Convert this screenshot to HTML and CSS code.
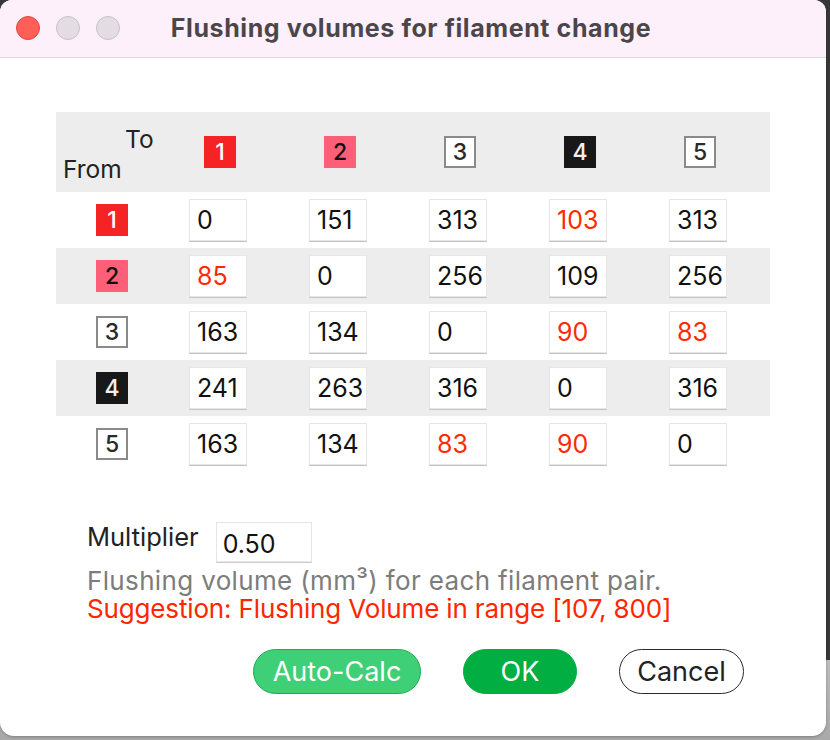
FILE: index.html
```html
<!DOCTYPE html>
<html>
<head>
<meta charset="utf-8">
<title>Flushing volumes for filament change</title>
<link rel="stylesheet" href="styles.css">
</head>
<body>
<div class="window">
  <div class="titlebar">
    <div class="lights">
      <span class="light close"></span>
      <span class="light"></span>
      <span class="light"></span>
    </div>
    <div class="title">Flushing volumes for filament change</div>
    <div></div>
  </div>
  <div class="content">
    <div class="matrix">
      <div class="mrow head shaded">
        <div class="corner"><span class="to">To</span><span class="from">From</span></div>
        <div class="cell center"><span class="badge b1">1</span></div>
        <div class="cell center"><span class="badge b2">2</span></div>
        <div class="cell center"><span class="badge b3">3</span></div>
        <div class="cell center"><span class="badge b4">4</span></div>
        <div class="cell center"><span class="badge b5">5</span></div>
      </div>
      <div class="mrow">
        <div class="rlabel"><span class="badge b1">1</span></div>
        <div class="cell"><span class="num">0</span></div>
        <div class="cell"><span class="num">151</span></div>
        <div class="cell"><span class="num">313</span></div>
        <div class="cell"><span class="num red">103</span></div>
        <div class="cell"><span class="num">313</span></div>
      </div>
      <div class="mrow shaded">
        <div class="rlabel"><span class="badge b2">2</span></div>
        <div class="cell"><span class="num red">85</span></div>
        <div class="cell"><span class="num">0</span></div>
        <div class="cell"><span class="num">256</span></div>
        <div class="cell"><span class="num">109</span></div>
        <div class="cell"><span class="num">256</span></div>
      </div>
      <div class="mrow">
        <div class="rlabel"><span class="badge b3">3</span></div>
        <div class="cell"><span class="num">163</span></div>
        <div class="cell"><span class="num">134</span></div>
        <div class="cell"><span class="num">0</span></div>
        <div class="cell"><span class="num red">90</span></div>
        <div class="cell"><span class="num red">83</span></div>
      </div>
      <div class="mrow shaded">
        <div class="rlabel"><span class="badge b4">4</span></div>
        <div class="cell"><span class="num">241</span></div>
        <div class="cell"><span class="num">263</span></div>
        <div class="cell"><span class="num">316</span></div>
        <div class="cell"><span class="num">0</span></div>
        <div class="cell"><span class="num">316</span></div>
      </div>
      <div class="mrow">
        <div class="rlabel"><span class="badge b5">5</span></div>
        <div class="cell"><span class="num">163</span></div>
        <div class="cell"><span class="num">134</span></div>
        <div class="cell"><span class="num red">83</span></div>
        <div class="cell"><span class="num red">90</span></div>
        <div class="cell"><span class="num">0</span></div>
      </div>
    </div>

    <div class="extra">
      <div class="mult">
        <span class="mult-label">Multiplier</span>
        <span class="mult-input">0.50</span>
      </div>
      <p class="hint">Flushing volume (mm³) for each filament pair.</p>
      <p class="warn">Suggestion: Flushing Volume in range [107, 800]</p>
    </div>

    <div class="buttons">
      <button class="btn auto">Auto-Calc</button>
      <button class="btn ok">OK</button>
      <button class="btn cancel">Cancel</button>
    </div>
  </div>
</div>
</body>
</html>
```

FILE: styles.css
```css
* { box-sizing: border-box; }

html, body {
  margin: 0;
  padding: 0;
}

body {
  width: 830px;
  height: 740px;
  overflow: hidden;
  background: linear-gradient(to bottom, #383838 0, #383838 660px, #bdbdbd 660px, #a9a9a9 740px);
  font-family: Inter, "Liberation Sans", sans-serif;
  color: #111;
}

.window {
  width: 826px;
  height: 736px;
  background: #ffffff;
  border-radius: 12px 12px 14px 14px;
  overflow: hidden;
  box-shadow: 0 1px 3px rgba(0,0,0,0.25);
}

.titlebar {
  height: 58px;
  background: #fdf0fb;
  border-bottom: 1px solid #dcdadc;
  display: grid;
  grid-template-columns: 1fr auto 1fr;
  align-items: center;
}

.lights {
  display: flex;
  gap: 16px;
  padding-left: 16px;
  padding-bottom: 1px;
}

.light {
  width: 24px;
  height: 24px;
  border-radius: 50%;
  background: #e3dce3;
  border: 1px solid #c9c0c9;
}

.light.close {
  background: #ff5f57;
  border-color: #e2463f;
}

.title {
  font-weight: 700;
  font-size: 25px;
  color: #4b464a;
  letter-spacing: 0.6px;
  padding-bottom: 1px;
  margin-right: 4px;
}

.content {
  padding: 54px 0 0 56px;
}

.matrix {
  display: flex;
  flex-direction: column;
  width: 714px;
}

.mrow {
  display: grid;
  grid-template-columns: 104px repeat(5, 120px);
  height: 56px;
  align-items: center;
}

.mrow.head {
  height: 80px;
}

.shaded {
  background: #ededed;
}

.corner {
  display: flex;
  flex-direction: column;
  font-size: 24.5px;
  line-height: 30px;
  color: #222;
  padding-top: 4px;
}

.corner .to { padding-left: 69px; }
.corner .from { padding-left: 7px; }

.cell.center {
  display: flex;
  justify-content: center;
}

.rlabel {
  padding-left: 40px;
  display: flex;
}

.badge {
  width: 32px;
  height: 32px;
  display: flex;
  align-items: center;
  justify-content: center;
  font-size: 23px;
  font-weight: 500;
  line-height: 1;
}

.b1 { background: #f52323; color: #fff; }
.b2 { background: #fd5f78; color: #111; }
.b3, .b5 { background: #fff; border: 2px solid #8a8a8a; color: #2a2a2a; }
.b4 { background: #181818; color: #f0f0f0; }

.cell { display: flex; }

.num {
  margin-left: 29px;
  width: 58px;
  height: 42px;
  background: #fff;
  border: 1px solid #e6e6e6;
  box-shadow: 0 1px 0 #c4c4c4;
  font-size: 25px;
  line-height: 40px;
  padding-left: 7px;
  color: #111;
  white-space: nowrap;
  overflow: hidden;
}

.num.red { color: #ff2a00; }

.extra {
  margin-top: 50px;
  margin-left: 31px;
}

.mult {
  display: flex;
  align-items: flex-start;
  gap: 17px;
}

.mult-label {
  font-size: 25.5px;
  line-height: 29px;
  color: #222;
}

.mult-input {
  width: 96px;
  height: 40px;
  border: 1px solid #e6e6e6;
  box-shadow: 0 1px 0 #cfcfcf;
  font-size: 25px;
  line-height: 38px;
  padding: 2px 0 0 6px;
  color: #111;
}

.hint, .warn {
  margin: 0;
  font-size: 26px;
  line-height: 28px;
}

.hint {
  margin-top: 5px;
  color: #7c7c7c;
  letter-spacing: 0.35px;
}

.warn {
  color: #ff2600;
  letter-spacing: -0.15px;
}

.buttons {
  display: flex;
  gap: 42px;
  margin-top: 26px;
  margin-left: 197px;
}

.btn {
  height: 45px;
  border-radius: 23px;
  font-family: Inter, "Liberation Sans", sans-serif;
  font-size: 27px;
  padding: 0;
  display: flex;
  align-items: center;
  justify-content: center;
}

.btn.auto {
  width: 168px;
  background: #3fcf76;
  border: 1px solid #1fae4e;
  color: #fff;
}

.btn.ok {
  width: 114px;
  background: #00ae42;
  border: 1px solid #00ae42;
  color: #fff;
}

.btn.cancel {
  width: 125px;
  background: #fff;
  border: 1.5px solid #2a2a2a;
  color: #222;
}
```
